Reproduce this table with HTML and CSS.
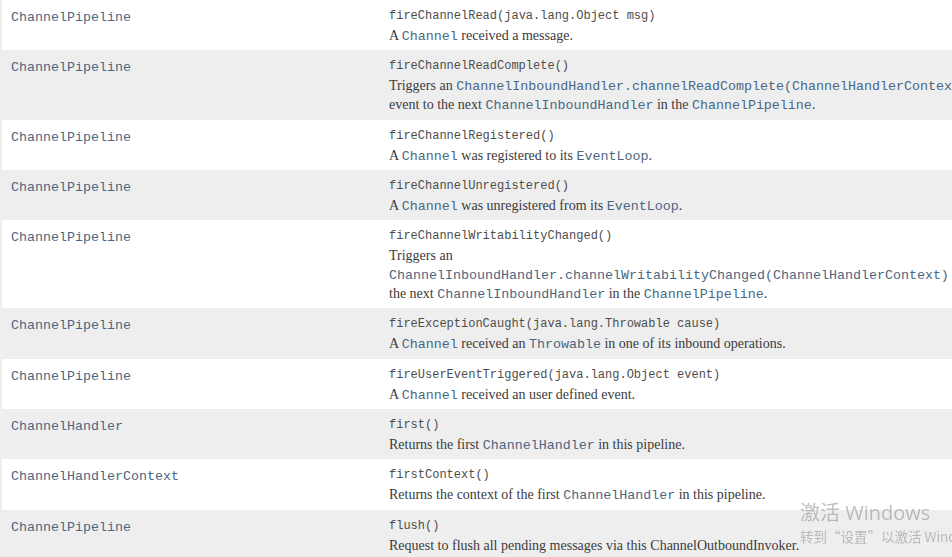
FILE: index.html
```html
<!DOCTYPE html>
<html lang="en">
<head>
    <meta charset="UTF-8">
    <title>ChannelPipeline - Index</title>
    <link rel="stylesheet" href="styles.css">
</head>
<body>
    <table class="summary">
        <tr class="row">
            <td class="col-first"><code class="type">ChannelPipeline</code></td>
            <td class="col-last">
                <div class="sig"><span class="name">fireChannelRead</span>(java.lang.Object&nbsp;msg)</div>
                <div class="desc">A <code>Channel</code> received a message.</div>
            </td>
        </tr>
        <tr class="row alt">
            <td class="col-first"><code class="type">ChannelPipeline</code></td>
            <td class="col-last">
                <div class="sig"><span class="name">fireChannelReadComplete</span>()</div>
                <div class="desc">Triggers an <code>ChannelInboundHandler.channelReadComplete(ChannelHandlerContext)</code> event to the next <code>ChannelInboundHandler</code> in the <code>ChannelPipeline</code>.</div>
            </td>
        </tr>
        <tr class="row">
            <td class="col-first"><code class="type">ChannelPipeline</code></td>
            <td class="col-last">
                <div class="sig"><span class="name">fireChannelRegistered</span>()</div>
                <div class="desc">A <code>Channel</code> was registered to its <code>EventLoop</code>.</div>
            </td>
        </tr>
        <tr class="row alt">
            <td class="col-first"><code class="type">ChannelPipeline</code></td>
            <td class="col-last">
                <div class="sig"><span class="name">fireChannelUnregistered</span>()</div>
                <div class="desc">A <code>Channel</code> was unregistered from its <code>EventLoop</code>.</div>
            </td>
        </tr>
        <tr class="row">
            <td class="col-first"><code class="type">ChannelPipeline</code></td>
            <td class="col-last">
                <div class="sig"><span class="name">fireChannelWritabilityChanged</span>()</div>
                <div class="desc">Triggers an <code>ChannelInboundHandler.channelWritabilityChanged(ChannelHandlerContext)</code> event to the next <code>ChannelInboundHandler</code> in the <code>ChannelPipeline</code>.</div>
            </td>
        </tr>
        <tr class="row alt">
            <td class="col-first"><code class="type">ChannelPipeline</code></td>
            <td class="col-last">
                <div class="sig"><span class="name">fireExceptionCaught</span>(java.lang.Throwable&nbsp;cause)</div>
                <div class="desc">A <code>Channel</code> received an <code>Throwable</code> in one of its inbound operations.</div>
            </td>
        </tr>
        <tr class="row">
            <td class="col-first"><code class="type">ChannelPipeline</code></td>
            <td class="col-last">
                <div class="sig"><span class="name">fireUserEventTriggered</span>(java.lang.Object&nbsp;event)</div>
                <div class="desc">A <code>Channel</code> received an user defined event.</div>
            </td>
        </tr>
        <tr class="row alt">
            <td class="col-first"><code class="type">ChannelHandler</code></td>
            <td class="col-last">
                <div class="sig"><span class="name">first</span>()</div>
                <div class="desc">Returns the first <code>ChannelHandler</code> in this pipeline.</div>
            </td>
        </tr>
        <tr class="row">
            <td class="col-first"><code class="type">ChannelHandlerContext</code></td>
            <td class="col-last">
                <div class="sig"><span class="name">firstContext</span>()</div>
                <div class="desc">Returns the context of the first <code>ChannelHandler</code> in this pipeline.</div>
            </td>
        </tr>
        <tr class="row alt">
            <td class="col-first"><code class="type">ChannelPipeline</code></td>
            <td class="col-last">
                <div class="sig"><span class="name">flush</span>()</div>
                <div class="desc">Request to flush all pending messages via this ChannelOutboundInvoker.</div>
            </td>
        </tr>
    </table>

    <div class="activate">
        <div class="activate-title">激活 Windows</div>
        <div class="activate-sub">转到“设置”以激活 Windows。</div>
    </div>
</body>
</html>
```

FILE: styles.css
```css
html, body {
    margin: 0;
    overflow: hidden;
}
body {
    background-color: #ffffff;
    color: #353833;
    font-family: "Liberation Serif", serif;
    font-size: 14px;
}
.summary {
    border-collapse: collapse;
    border-left: 2px solid #eeeeef;
    width: 1006px;
}
.row {
    background-color: #ffffff;
}
.row.alt {
    background-color: #eeeeef;
}
.summary td {
    vertical-align: top;
    padding: 9px 3px 5.3px 9px;
}
.col-first {
    width: 366px;
}
.type {
    font-family: "Liberation Mono", monospace;
    font-size: 13.33px;
    line-height: 14px;
    color: #4a6782;
}
.sig {
    font-family: "Liberation Mono", monospace;
    font-size: 12px;
    line-height: 14px;
    color: #4d4d4d;
    white-space: nowrap;
}
.desc {
    margin-top: 3px;
    line-height: 19px;
    color: #3b3b3b;
}
.desc code {
    font-family: "Liberation Mono", monospace;
    font-size: 13.33px;
    line-height: 1;
    color: #4a6782;
}
.activate {
    position: fixed;
    left: 800px;
    top: 500px;
    color: rgba(150, 150, 150, 0.6);
    font-family: "Open Sans", "Noto Sans CJK SC", sans-serif;
    white-space: nowrap;
}
.activate-title {
    font-size: 20px;
    line-height: 26px;
}
.activate-sub {
    font-family: "Noto Sans CJK SC", sans-serif;
    font-size: 13.5px;
    line-height: 20px;
}
```
